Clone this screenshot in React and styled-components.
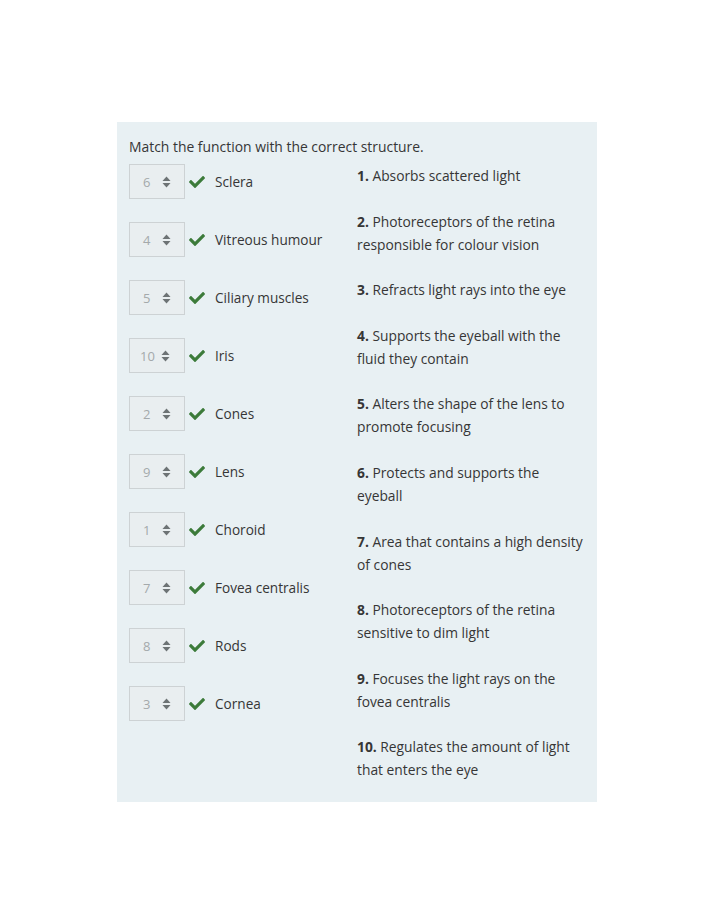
import styled, { createGlobalStyle } from 'styled-components';
import { FaCheck } from 'react-icons/fa';

const GlobalStyle = createGlobalStyle`
  html, body {
    margin: 0;
    padding: 0;
    background: #ffffff;
  }
  body {
    font-family: 'Open Sans', 'Noto Sans', sans-serif;
    color: #363636;
  }
`;

const Page = styled.div`
  padding: 122px 0 0 117px;
`;

const Panel = styled.section`
  width: 480px;
  box-sizing: border-box;
  background-color: #e8f0f3;
  padding: 13px 12px 21px 12px;
`;

const Prompt = styled.p`
  margin: 0 0 6px;
  font-size: 13.9px;
  line-height: 23px;
`;

const Columns = styled.div`
  display: grid;
  grid-template-columns: 228px 1fr;
`;

const Answers = styled.div`
  display: flex;
  flex-direction: column;
  gap: 23px;
`;

const AnswerRow = styled.div`
  display: flex;
  align-items: center;
  height: 35px;
`;

const Select = styled.div`
  width: 56px;
  height: 35px;
  box-sizing: border-box;
  border: 1px solid #cdd2d4;
  background-color: #e9eef0;
  display: flex;
  align-items: center;
  padding: 0 0 0 ${p => (p.$wide ? 10 : 13)}px;
  gap: ${p => (p.$wide ? 6 : 12)}px;
  color: #a4a9ab;
  font-size: 13px;
`;

const Tick = styled.span`
  display: flex;
  color: #3c7b3a;
  margin: 0 10px 0 4px;
`;

const Label = styled.span`
  font-size: 13.6px;
`;

const Choices = styled.ol`
  list-style: none;
  margin: 0;
  padding: 0;
`;

const Choice = styled.li`
  font-size: 13.8px;
  line-height: 23px;
  margin-bottom: 22.6px;

  &:last-child {
    margin-bottom: 0;
  }
`;

const Line = styled.span`
  display: block;
  white-space: nowrap;
`;

const Num = styled.strong`
  font-weight: 700;
`;

function Arrows() {
  return (
    <svg width="9" height="12" viewBox="0 0 9 12">
      <path d="M4.5 0.5 L8.5 5 L0.5 5 Z" fill="#6d7375" />
      <path d="M4.5 11.5 L8.5 7 L0.5 7 Z" fill="#6d7375" />
    </svg>
  );
}

const answers = [
  ['6', 'Sclera'],
  ['4', 'Vitreous humour'],
  ['5', 'Ciliary muscles'],
  ['10', 'Iris'],
  ['2', 'Cones'],
  ['9', 'Lens'],
  ['1', 'Choroid'],
  ['7', 'Fovea centralis'],
  ['8', 'Rods'],
  ['3', 'Cornea'],
];

const choices = [
  ['Absorbs scattered light'],
  ['Photoreceptors of the retina', 'responsible for colour vision'],
  ['Refracts light rays into the eye'],
  ['Supports the eyeball with the', 'fluid they contain'],
  ['Alters the shape of the lens to', 'promote focusing'],
  ['Protects and supports the', 'eyeball'],
  ['Area that contains a high density', 'of cones'],
  ['Photoreceptors of the retina', 'sensitive to dim light'],
  ['Focuses the light rays on the', 'fovea centralis'],
  ['Regulates the amount of light', 'that enters the eye'],
];

export default function App() {
  return (
    <>
      <GlobalStyle />
      <Page>
        <Panel>
          <Prompt>Match the function with the correct structure.</Prompt>
          <Columns>
            <Answers>
              {answers.map(([value, name]) => (
                <AnswerRow key={name}>
                  <Select $wide={value.length > 1}>
                    <span>{value}</span>
                    <Arrows />
                  </Select>
                  <Tick><FaCheck size={16} /></Tick>
                  <Label>{name}</Label>
                </AnswerRow>
              ))}
            </Answers>
            <Choices>
              {choices.map(([first, second], i) => (
                <Choice key={i}>
                  <Line><Num>{i + 1}.</Num> {first}</Line>
                  {second && <Line>{second}</Line>}
                </Choice>
              ))}
            </Choices>
          </Columns>
        </Panel>
      </Page>
    </>
  );
}
